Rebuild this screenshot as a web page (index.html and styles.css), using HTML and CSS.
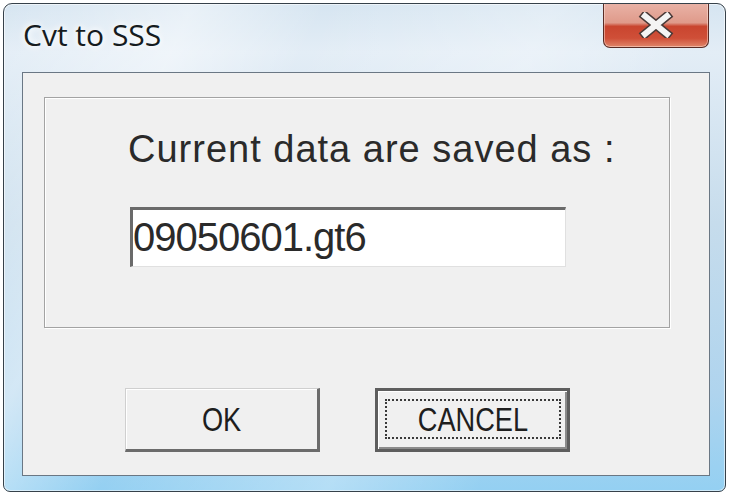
FILE: index.html
```html
<!DOCTYPE html>
<html>
<head>
<meta charset="utf-8">
<link rel="stylesheet" href="styles.css">
</head>
<body>
<div class="window">
  <div class="titlebar">
    <span class="title">Cvt to SSS</span>
    <div class="close">
      <svg width="36" height="26" viewBox="0 0 36 26">
        <path d="M7 4 L29 22 M29 4 L7 22" stroke="#4a3a38" stroke-width="9" stroke-linecap="square" fill="none"/>
        <path d="M7 4 L29 22 M29 4 L7 22" stroke="#f4f4f4" stroke-width="6" stroke-linecap="square" fill="none"/>
      </svg>
    </div>
  </div>
  <div class="frame-body">
    <div class="client">
      <div class="group">
        <div class="label">Current data are saved as :</div>
        <div class="field">09050601.gt6</div>
      </div>
      <div class="buttons">
        <div class="btn"><span class="btn-text">OK</span></div>
        <div class="btn btn-default"><div class="focus"><span class="btn-text">CANCEL</span></div></div>
      </div>
    </div>
  </div>
</div>
</body>
</html>
```
FILE: styles.css
```css
* { box-sizing: border-box; }
html, body { margin: 0; padding: 0; background: #ffffff; }
body { padding: 3px; width: 729px; height: 495px; overflow: hidden; }

.window {
  width: 723px;
  height: 489px;
  border: 1px solid #36414a;
  border-radius: 9px 9px 7px 7px;
  background:
    linear-gradient(115deg, rgba(255,255,255,0) 0%, rgba(255,255,255,0.45) 20%, rgba(255,255,255,0) 34%, rgba(255,255,255,0.3) 58%, rgba(255,255,255,0) 74%),
    linear-gradient(to bottom, #d6e5f1 0%, #e3edf6 10%, #c6dcec 45%, #afd4ee 80%, #94d0f2 100%);
  box-shadow: inset 0 0 0 1px rgba(255,255,255,0.55);
  display: flex;
  flex-direction: column;
  overflow: hidden;
}

.titlebar {
  height: 68px;
  display: flex;
  align-items: flex-start;
  padding-left: 19px;
  padding-right: 16px;
}
.title {
  font-family: "Open Sans", "Noto Sans", sans-serif;
  font-size: 30px;
  line-height: 30px;
  margin-top: 16px;
  color: #151b20;
  text-shadow: 0 0 6px #ffffff, 0 0 10px #ffffff;
}
.close {
  margin-left: auto;
  margin-top: -1px;
  width: 106px;
  height: 45px;
  border: 1px solid #5a2c25;
  border-top: none;
  border-radius: 0 0 7px 7px;
  background:
    linear-gradient(to bottom, #e9b3a7 0%, #df9a8a 45%, #c9452f 53%, #cf4f38 80%, #e0866a 100%);
  box-shadow: inset 0 0 0 1px rgba(255,230,220,0.5);
  display: flex;
  align-items: center;
  justify-content: center;
}

.frame-body {
  flex: 1;
  padding: 0 15px 15px 18px;
  display: flex;
}
.client {
  flex: 1;
  border: 1px solid #6a7784;
  background: #f0f0f0;
  padding: 24px 0 0 21px;
}

.group {
  width: 626px;
  height: 231px;
  border: 1px solid #a3a3a3;
  box-shadow: inset 1px 1px 0 #ffffff, 1px 1px 0 #ffffff;
  padding: 32px 0 0 83px;
}
.label {
  font-family: "Liberation Sans", Arial, sans-serif;
  font-size: 38px;
  line-height: 38px;
  letter-spacing: 1px;
  color: #2a2a2a;
  white-space: nowrap;
}
.field {
  margin-top: 39px;
  margin-left: 2px;
  width: 436px;
  height: 60px;
  background: #ffffff;
  border-top: 3px solid #6a6a6a;
  border-left: 3px solid #6a6a6a;
  border-right: 1px solid #e0e0e0;
  border-bottom: 1px solid #e0e0e0;
  padding: 7px 0 0 0;
  font-family: "Liberation Sans", Arial, sans-serif;
  font-size: 40px;
  line-height: 40px;
  color: #2a2a2a;
  letter-spacing: -1px;
}

.buttons {
  margin-top: 60px;
  padding-left: 81px;
  display: flex;
  gap: 55px;
}
.btn {
  width: 195px;
  height: 64px;
  background: #f0f0f0;
  border-top: 1px solid #cfcfcf;
  border-left: 1px solid #cfcfcf;
  border-right: 3px solid #6b6b6b;
  border-bottom: 3px solid #6b6b6b;
  box-shadow: inset 1px 1px 0 #ffffff;
  display: flex;
  align-items: center;
  justify-content: center;
}
.btn-default {
  border: 3px solid #5e5e5e;
  box-shadow: inset 1px 1px 0 #ffffff, inset -2px -2px 0 #8c8c8c;
  padding: 8px 6px 10px 7px;
  align-items: stretch;
  justify-content: stretch;
}
.focus {
  flex: 1;
  border: 2px dotted #3a3a3a;
  display: flex;
  align-items: center;
  justify-content: center;
}
.btn-text {
  display: inline-block;
  font-family: "Liberation Sans", Arial, sans-serif;
  font-size: 34px;
  line-height: 34px;
  color: #1e1e1e;
  transform: scaleX(0.8);
}
```
